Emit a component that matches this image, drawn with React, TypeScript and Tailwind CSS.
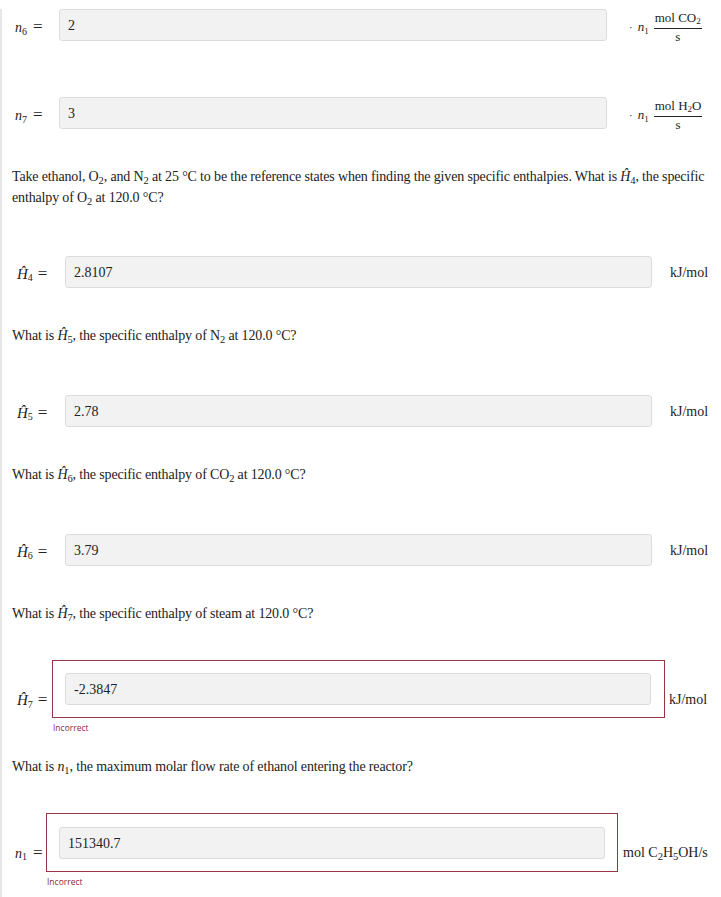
import React from 'react';

const serif = { fontFamily: '"Liberation Serif", "Times New Roman", serif' };

const Field: React.FC<{ value: string }> = ({ value }) => (
  <div className="flex-1 h-[32px] bg-[#f2f2f2] border border-[#dcdcdc] rounded-[3px] flex items-center pl-[8px] text-[14px] text-[#222]">
    {value}
  </div>
);

const NLabel: React.FC<{ sub: string }> = ({ sub }) => (
  <span className="text-[14px] text-[#222] whitespace-nowrap">
    <i>n</i>
    <sub className="text-[10px] leading-none">{sub}</sub>
    <span className="ml-[6px] text-[17px] leading-none">=</span>
  </span>
);

const HLabel: React.FC<{ sub: string }> = ({ sub }) => (
  <span className="text-[15px] text-[#222] whitespace-nowrap">
    <i>Ĥ</i>
    <sub className="text-[10px] leading-none">{sub}</sub>
    <span className="ml-[5px] text-[17px] leading-none">=</span>
  </span>
);

const Frac: React.FC<{ top: React.ReactNode }> = ({ top }) => (
  <div className="flex items-center text-[#222]">
    <span className="text-[11px] mr-[5px]">·</span>
    <span className="text-[13px] mr-[5px]">
      <i>n</i>
      <sub className="text-[9px] leading-none">1</sub>
    </span>
    <span className="inline-flex flex-col items-center text-[13px] leading-[14px]">
      <span className="px-[1px]">{top}</span>
      <span className="w-full border-t border-[#222] mt-[3px]" />
      <span className="mt-[1px]">s</span>
    </span>
  </div>
);

const Incorrect: React.FC = () => (
  <div className="mt-[4px] text-[8.5px] leading-[12px] text-[#8e2a3a]" style={{ fontFamily: '"Open Sans", sans-serif' }}>
    Incorrect
  </div>
);

const Question: React.FC<{ children: React.ReactNode; className?: string }> = ({ children, className }) => (
  <p className={`text-[14px] leading-[21px] tracking-[-0.15px] text-[#222] [&_sub]:leading-none ${className ?? ''}`}>
    {children}
  </p>
);

export default function App() {
  return (
    <div className="w-[721px] h-[897px] bg-white overflow-hidden" style={serif}>
      <div className="h-full border-l-2 border-[#e6e6e6] pl-[10px] pr-[14px]">
        {/* n6 */}
        <div className="flex items-center mt-[9px] h-[32px]">
          <div className="w-[47px] pl-[3px] pt-[4px]"><NLabel sub="6" /></div>
          <Field value="2" />
          <div className="w-[100px] pl-[22px] pt-[4px]">
            <Frac top={<>mol CO<sub className="text-[9px] leading-none">2</sub></>} />
          </div>
        </div>

        {/* n7 */}
        <div className="flex items-center mt-[56px] h-[32px]">
          <div className="w-[47px] pl-[3px] pt-[4px]"><NLabel sub="7" /></div>
          <Field value="3" />
          <div className="w-[100px] pl-[22px] pt-[4px]">
            <Frac top={<>mol H<sub className="text-[9px] leading-none">2</sub>O</>} />
          </div>
        </div>

        <Question className="mt-[37px]">
          Take ethanol, O<sub>2</sub>, and N<sub>2</sub> at 25 °C to be the reference states when finding the given
          specific enthalpies. What is <i>Ĥ</i><sub>4</sub>, the specific enthalpy of O<sub>2</sub> at 120.0 °C?
        </Question>

        {/* H4 */}
        <div className="flex items-center mt-[48px] h-[32px]">
          <div className="w-[53px] pl-[5px] pt-[3px]"><HLabel sub="4" /></div>
          <Field value="2.8107" />
          <div className="w-[55px] pl-[18px] text-[14px] text-[#222]">kJ/mol</div>
        </div>

        <Question className="mt-[37px]">
          What is <i>Ĥ</i><sub>5</sub>, the specific enthalpy of N<sub>2</sub> at 120.0 °C?
        </Question>

        {/* H5 */}
        <div className="flex items-center mt-[49px] h-[32px]">
          <div className="w-[53px] pl-[5px] pt-[3px]"><HLabel sub="5" /></div>
          <Field value="2.78" />
          <div className="w-[55px] pl-[18px] text-[14px] text-[#222]">kJ/mol</div>
        </div>

        <Question className="mt-[37px]">
          What is <i>Ĥ</i><sub>6</sub>, the specific enthalpy of CO<sub>2</sub> at 120.0 °C?
        </Question>

        {/* H6 */}
        <div className="flex items-center mt-[49px] h-[32px]">
          <div className="w-[53px] pl-[5px] pt-[3px]"><HLabel sub="6" /></div>
          <Field value="3.79" />
          <div className="w-[55px] pl-[18px] text-[14px] text-[#222]">kJ/mol</div>
        </div>

        <Question className="mt-[37px]">
          What is <i>Ĥ</i><sub>7</sub>, the specific enthalpy of steam at 120.0 °C?
        </Question>

        {/* H7 */}
        <div className="mt-[36px]">
          <div className="flex items-center">
            <div className="w-[40px] pl-[5px] pt-[22px]"><HLabel sub="7" /></div>
            <div className="flex-1 flex border border-[#963544] px-[12px] py-[12px] pr-[13px]">
              <Field value="-2.3847" />
            </div>
            <div className="w-[42px] pl-[4px] pt-[20px] text-[14px] text-[#222]">kJ/mol</div>
          </div>
          <div className="pl-[41px]"><Incorrect /></div>
        </div>

        <Question className="mt-[22px]">
          What is <i>n</i><sub>1</sub>, the maximum molar flow rate of ethanol entering the reactor?
        </Question>

        {/* n1 */}
        <div className="mt-[36px]">
          <div className="flex items-center">
            <div className="w-[34px] pl-[3px] pt-[20px]"><NLabel sub="1" /></div>
            <div className="flex-1 flex border border-[#963544] pl-[12px] pr-[12px] pt-[13px] pb-[12px]">
              <Field value="151340.7" />
            </div>
            <div className="w-[89px] pl-[5px] pt-[20px] text-[14px] text-[#222] whitespace-nowrap [&_sub]:leading-none">
              mol C<sub>2</sub>H<sub>5</sub>OH/s
            </div>
          </div>
          <div className="pl-[35px]"><Incorrect /></div>
        </div>
      </div>
    </div>
  );
}
